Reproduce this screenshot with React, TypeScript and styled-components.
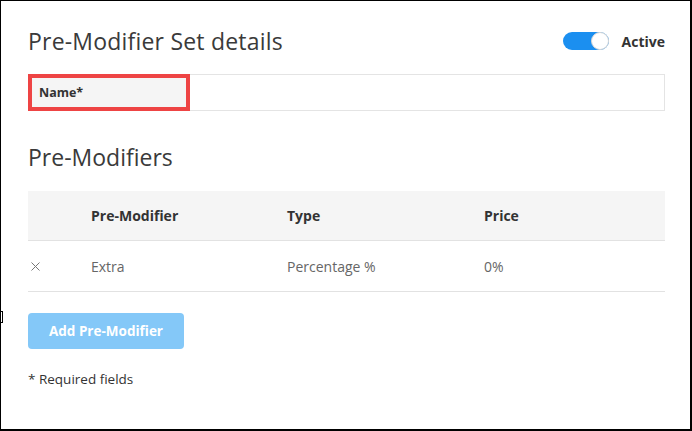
import React from "react";
import styled, { createGlobalStyle } from "styled-components";

const Global = createGlobalStyle`
  html, body { margin: 0; padding: 0; background: #fff; }
  body { font-family: "Open Sans", "Noto Sans", sans-serif; color: #333; }
  * { box-sizing: border-box; }
`;

const Frame = styled.div`
  width: 692px;
  height: 431px;
  border: 1px solid #000;
  border-right-width: 2px;
  border-bottom-width: 2px;
  padding: 25px 25px 0 27px;
  display: flex;
  flex-direction: column;
  position: relative;
`;

const Header = styled.div`
  display: flex;
  align-items: center;
  justify-content: space-between;
  height: 30px;
`;

const Title = styled.h1`
  margin: 0;
  font-size: 23px;
  font-weight: 400;
  color: #3a3a3a;
  line-height: 30px;
  letter-spacing: 0.2px;
`;

const ToggleWrap = styled.label`
  display: flex;
  align-items: center;
  gap: 13px;
  margin-right: 0;
  font-size: 14px;
  font-weight: 700;
  color: #333;
`;

const Track = styled.span<{ $on: boolean }>`
  width: 46px;
  height: 18px;
  border-radius: 9px;
  background: ${(p) => (p.$on ? "#1b8ff0" : "#ccc")};
  position: relative;
  display: inline-block;
`;

const Knob = styled.span<{ $on: boolean }>`
  position: absolute;
  top: 0;
  ${(p) => (p.$on ? "right: 0;" : "left: 0;")}
  width: 18px;
  height: 18px;
  border-radius: 50%;
  background: #fff;
  border: 1px solid #d6d6d6;
`;

const FieldRow = styled.div`
  margin-top: 18px;
  display: flex;
  height: 37px;
  border: 1px solid #e4e4e4;
`;

const FieldLabel = styled.div<{ $error: boolean }>`
  width: 162px;
  margin: -1px 0 -1px -1px;
  background: #f5f5f5;
  border: 4px solid ${(p) => (p.$error ? "#ee4444" : "transparent")};
  display: flex;
  align-items: center;
  padding-left: 7px;
  font-size: 12.5px;
  font-weight: 700;
  color: #333;
`;

const FieldInput = styled.input`
  flex: 1;
  border: none;
  outline: none;
  background: transparent;
  font: inherit;
`;

const SectionTitle = styled.h2`
  margin: 31px 0 0;
  font-size: 23px;
  font-weight: 400;
  color: #3a3a3a;
  line-height: 30px;
`;

const Table = styled.div`
  margin-top: 19px;
  display: flex;
  flex-direction: column;
`;

const Row = styled.div<{ $head?: boolean }>`
  display: grid;
  grid-template-columns: 63px 196px 197px 1fr;
  align-items: center;
  height: ${(p) => (p.$head ? "50px" : "51px")};
  background: ${(p) => (p.$head ? "#f5f5f5" : "#fff")};
  border-bottom: 1px solid #e2e2e2;
  font-size: 14px;
  font-weight: ${(p) => (p.$head ? 700 : 400)};
  color: ${(p) => (p.$head ? "#333" : "#666")};
`;

const RemoveButton = styled.button`
  border: none;
  background: transparent;
  padding: 0;
  margin-left: 2px;
  width: 10px;
  height: 10px;
  display: flex;
  align-items: center;
  justify-content: center;
  cursor: pointer;
`;

const AddButton = styled.button`
  margin-top: 21px;
  align-self: flex-start;
  width: 156px;
  height: 36px;
  border: none;
  border-radius: 4px;
  background: #84c8f8;
  color: #fff;
  font-family: inherit;
  font-size: 13.5px;
  font-weight: 700;
  cursor: not-allowed;
`;

const Note = styled.div`
  margin-top: 21px;
  font-size: 13.5px;
  line-height: 18px;
  color: #333;
`;

const EdgeMark = styled.span`
  position: absolute;
  left: -1px;
  top: 310px;
  width: 3px;
  height: 12px;
  border: 1px solid #000;
  border-left: none;
`;

const rows = [{ name: "Extra", type: "Percentage %", price: "0%" }];

export default function App() {
  return (
    <>
      <Global />
      <Frame>
        <EdgeMark />
        <Header>
          <Title>Pre-Modifier Set details</Title>
          <ToggleWrap>
            <Track $on>
              <Knob $on />
            </Track>
            Active
          </ToggleWrap>
        </Header>
        <FieldRow>
          <FieldLabel $error>Name*</FieldLabel>
          <FieldInput aria-label="Name" />
        </FieldRow>
        <SectionTitle>Pre-Modifiers</SectionTitle>
        <Table>
          <Row $head>
            <span />
            <span>Pre-Modifier</span>
            <span>Type</span>
            <span>Price</span>
          </Row>
          {rows.map((r) => (
            <Row key={r.name}>
              <RemoveButton aria-label="Remove">
                <svg width="9" height="9" viewBox="0 0 9 9">
                  <path d="M0.5 0.5L8.5 8.5M8.5 0.5L0.5 8.5" stroke="#777" strokeWidth="1" />
                </svg>
              </RemoveButton>
              <span>{r.name}</span>
              <span>{r.type}</span>
              <span>{r.price}</span>
            </Row>
          ))}
        </Table>
        <AddButton disabled>Add Pre-Modifier</AddButton>
        <Note>* Required fields</Note>
      </Frame>
    </>
  );
}
